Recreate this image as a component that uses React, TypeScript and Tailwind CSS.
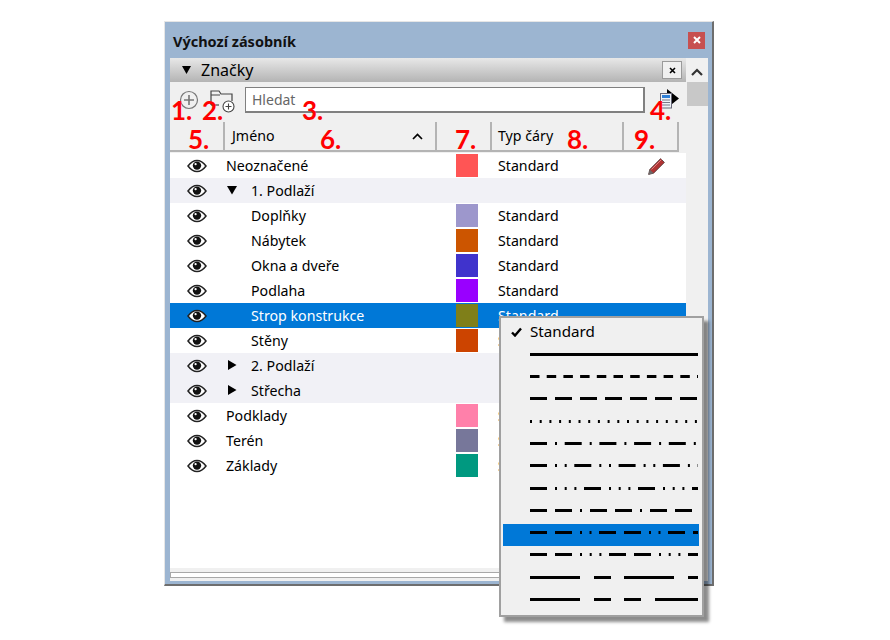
const font = "font-['Noto_Sans',sans-serif]";

type Row = {
  name: string;
  color?: string;
  kind?: "group" | "open" | "closed" | "child";
  selected?: boolean;
  pencil?: boolean;
};

const rows: Row[] = [
  { name: "Neoznačené", color: "#ff5555", pencil: true },
  { name: "1. Podlaží", kind: "open" },
  { name: "Doplňky", color: "#9d97cc", kind: "child" },
  { name: "Nábytek", color: "#cc5500", kind: "child" },
  { name: "Okna a dveře", color: "#4033cc", kind: "child" },
  { name: "Podlaha", color: "#9900ff", kind: "child" },
  { name: "Strop konstrukce", color: "#7f7f19", kind: "child", selected: true },
  { name: "Stěny", color: "#cc4400", kind: "child" },
  { name: "2. Podlaží", kind: "closed" },
  { name: "Střecha", kind: "closed" },
  { name: "Podklady", color: "#ff80aa" },
  { name: "Terén", color: "#77779a" },
  { name: "Základy", color: "#009980" },
];

const dashes: string[] = [
  "",
  "9.5 7.2",
  "17 8",
  "2 7.7",
  "17 8 2 7.7",
  "17 8 2 7.7 2 7.6",
  "17 8 2 7.7 2 7.7 2 7.6",
  "17 8 17 8 2 8",
  "17 8 17 8 2 7.5 2 7.5",
  "17 8 17 8 2 7.7 2 7.7 2 7.6",
  "50 14 17 13",
  "50 14 17 13 17 14",
];

function Eye() {
  return (
    <svg width="20" height="14" viewBox="0 0 20 14">
      <path d="M1 7C4 3 7 1.5 10 1.5S16 3 19 7C16 11 13 12.5 10 12.5S4 11 1 7Z" fill="white" stroke="#222" strokeWidth="1.5" />
      <circle cx="10" cy="6.6" r="4.2" fill="#111" />
      <circle cx="8.6" cy="5.2" r="1.1" fill="white" />
    </svg>
  );
}

function Pencil() {
  return (
    <svg width="18" height="18" viewBox="0 0 18 18">
      <path d="M0.6 17.4L1.8 12.4L12.6 1.6L16.4 5.4L5.6 16.2Z" fill="#b03434" stroke="#4a3a3a" strokeWidth="0.8" />
      <path d="M3.5 12.5L13.5 2.5" stroke="#e08080" strokeWidth="1" />
      <path d="M0.6 17.4L1.8 12.4L5.6 16.2Z" fill="#6a6a6a" />
    </svg>
  );
}

function ListRow({ row }: { row: Row }) {
  const isGroup = row.kind === "open" || row.kind === "closed";
  return (
    <div
      className={`flex h-[25px] items-center text-[14.2px] ${
        row.selected ? "bg-[#0078d7] text-white" : isGroup ? "bg-[#f1f1f6] text-black" : "bg-white text-black"
      }`}
    >
      <div className="flex w-[56px] shrink-0 justify-center pr-[2px]">
        <Eye />
      </div>
      <div className="flex w-[230px] min-w-0 shrink-0 items-center">
        {row.kind === "open" && (
          <svg className="mr-[14px] ml-[1px]" width="10" height="10" viewBox="0 0 10 10">
            <path d="M0 1H10L5 9.5Z" fill="black" />
          </svg>
        )}
        {row.kind === "closed" && (
          <svg className="mr-[14px] ml-[1px]" width="10" height="10" viewBox="0 0 10 10">
            <path d="M1 0V10L9.5 5Z" fill="black" />
          </svg>
        )}
        {row.kind === "child" && <div className="w-[25px]" />}
        <span className="whitespace-nowrap">{row.name}</span>
      </div>
      <div className="flex w-[42px] shrink-0 justify-start">
        {row.color && <div className="h-[23px] w-[22px]" style={{ backgroundColor: row.color }} />}
      </div>
      <div className="w-[150px] shrink-0 whitespace-nowrap">{row.color ? "Standard" : ""}</div>
      {row.pencil && <Pencil />}
    </div>
  );
}

function HeaderCell({ className, children }: { className: string; children?: React.ReactNode }) {
  return (
    <div className={`flex h-[28px] shrink-0 items-center border-r-2 border-[#b4b4b4] text-[14.2px] ${className}`}>
      {children}
    </div>
  );
}

function LineMenu() {
  return (
    <div className="absolute top-[316px] left-[499px] h-[301px] w-[205px] border-2 border-[#a0a0a0] bg-[#f0f0f0] shadow-[5px_5px_3px_rgba(0,0,0,0.45)]">
      <div className="flex h-[27.6px] items-center text-[15.2px] text-black">
        <svg className="mr-[8px] ml-[10px]" width="11" height="10" viewBox="0 0 11 10">
          <path d="M1 5.5L4 8.5L10 1.5" fill="none" stroke="black" strokeWidth="2.4" />
        </svg>
        Standard
      </div>
      {dashes.map((d, i) => (
        <div
          key={i}
          className={`h-[22.3px] pt-[7.2px] ${i === 8 ? "ml-[2px] w-[196px] bg-[#0078d7] pl-[27px]" : "pl-[29px]"}`}
        >
          <svg className="block" width="168" height="3" viewBox="0 0 168 3">
            <line x1="0" y1="1.5" x2="168" y2="1.5" stroke="black" strokeWidth="3" strokeDasharray={d || undefined} />
          </svg>
        </div>
      ))}
    </div>
  );
}

export default function App() {
  return (
    <div className={`relative h-[640px] w-[890px] overflow-hidden bg-white pt-[21px] pl-[164px] ${font}`}>
      <div className="h-[565px] w-[550px] border-t border-l border-[#e6e6e6] border-r-2 border-b-2 border-r-[#6e6e6e] border-b-[#6e6e6e] bg-[#9cb5d1] pr-[4px] pb-[3px] pl-[5px]">
        {/* title bar */}
        <div className="flex h-[36px] items-center justify-between pr-[3px] pl-[3px]">
          <span className="mt-[4px] text-[14.5px] font-bold text-[#111]">Výchozí zásobník</span>
          <div className="flex h-[17px] w-[17px] items-center justify-center bg-[#c75050]">
            <svg width="8" height="8" viewBox="0 0 8 8">
              <path d="M1 1L7 7M7 1L1 7" stroke="white" strokeWidth="2" />
            </svg>
          </div>
        </div>

        <div className="flex h-[523px]">
          <div className="flex w-[516px] flex-col bg-white">
            {/* section header */}
            <div className="flex h-[24px] shrink-0 items-center justify-between bg-gradient-to-b from-[#e8e8e8] to-[#b4b4b4] pr-[4px] pl-[12px]">
              <div className="flex items-center">
                <svg className="mr-[10px]" width="9" height="8" viewBox="0 0 9 8">
                  <path d="M0 0H9L4.5 8Z" fill="black" />
                </svg>
                <span className="text-[16px] text-black">Značky</span>
              </div>
              <div className="flex h-[18px] w-[20px] items-center justify-center border border-[#9a9a9a] bg-[#f0f0f0]">
                <svg width="7" height="7" viewBox="0 0 7 7">
                  <path d="M1 1L6 6M6 1L1 6" stroke="black" strokeWidth="1.6" />
                </svg>
              </div>
            </div>

            {/* toolbar */}
            <div className="flex h-[40px] shrink-0 items-start bg-[#f0f0f0] pt-[5px]">
              <svg className="mt-[3px] ml-[9px]" width="20" height="20" viewBox="0 0 20 20">
                <circle cx="10" cy="10" r="8.5" fill="none" stroke="#777" strokeWidth="1.2" />
                <path d="M10 5V15M5 10H15" stroke="#777" strokeWidth="1.6" />
              </svg>
              <svg className="mt-[2px] ml-[11px]" width="26" height="26" viewBox="0 0 26 26">
                <path d="M1 16V2H9L11 5H22V12" fill="none" stroke="#444" strokeWidth="1.2" />
                <path d="M1 6H10" stroke="#444" strokeWidth="1" />
                <path d="M1 16H9" stroke="#444" strokeWidth="1.2" />
                <circle cx="18.5" cy="17.5" r="5.5" fill="white" stroke="#444" strokeWidth="1.1" />
                <path d="M18.5 14.5V20.5M15.5 17.5H21.5" stroke="#444" strokeWidth="1.1" />
              </svg>
              <div className="ml-[9px] flex h-[26px] w-[400px] items-center border-2 border-t border-l border-[#808080] bg-white pl-[6px] text-[14px] text-[#666]">
                Hledat
              </div>
              <svg className="mt-[2px] ml-[15px]" width="20" height="20" viewBox="0 0 20 20">
                <path d="M0 5H7V0L19 9.5L7 19V14H0Z" fill="black" />
                <rect x="0.5" y="4.5" width="11" height="14.5" fill="#eef2f7" stroke="#667" strokeWidth="1" />
                <rect x="2" y="6" width="8" height="3" fill="#2f7fd6" />
                <path d="M2 11H10M2 13.5H10M2 16H10" stroke="#778" strokeWidth="1" />
              </svg>
            </div>

            {/* column header */}
            <div className="flex h-[31px] shrink-0 items-start bg-[#f0f0f0] pr-[7px]">
              <div className="flex h-[30px] w-[509px] border-b-2 border-[#b4b4b4]">
                <HeaderCell className="w-[55px]" />
                <HeaderCell className="w-[212px] justify-between pr-[12px] pl-[7px]">
                  <span>Jméno</span>
                  <svg width="11" height="7" viewBox="0 0 11 7">
                    <path d="M1 6L5.5 1.5L10 6" fill="none" stroke="black" strokeWidth="1.7" />
                  </svg>
                </HeaderCell>
                <HeaderCell className="w-[55px]" />
                <HeaderCell className="w-[132px] pl-[6px]">Typ čáry</HeaderCell>
                <HeaderCell className="w-[55px]" />
              </div>
            </div>

            {/* layer rows */}
            <div className="flex-1">
              {rows.map((r) => (
                <ListRow key={r.name} row={r} />
              ))}
            </div>

            {/* horizontal scrollbar */}
            <div className="flex h-[13px] shrink-0 items-start bg-[#f0f0f0] pt-[4px]">
              <div className="h-[6px] w-full border border-[#a8a8a8] bg-white" />
            </div>
          </div>

          {/* vertical scrollbar */}
          <div className="w-[22px] bg-[#f0f0f0]">
            <div className="flex h-[24px] items-center justify-center">
              <svg className="mt-[3px]" width="12" height="8" viewBox="0 0 12 8">
                <path d="M1 7L6 2L11 7" fill="none" stroke="#333" strokeWidth="2.2" />
              </svg>
            </div>
            <div className="ml-[1px] h-[24px] w-[21px] bg-[#c8c8c8]" />
          </div>
        </div>
      </div>

      <LineMenu />

      {/* callout numbers */}
      <span className="absolute top-[94px] left-[171px] font-['Lato',sans-serif] text-[26px] leading-[32px] font-bold text-[#ff0000]">1.</span>
      <span className="absolute top-[94px] left-[202px] font-['Lato',sans-serif] text-[26px] leading-[32px] font-bold text-[#ff0000]">2.</span>
      <span className="absolute top-[94px] left-[302px] font-['Lato',sans-serif] text-[26px] leading-[32px] font-bold text-[#ff0000]">3.</span>
      <span className="absolute top-[94px] left-[650px] font-['Lato',sans-serif] text-[26px] leading-[32px] font-bold text-[#ff0000]">4.</span>
      <span className="absolute top-[123px] left-[188px] font-['Lato',sans-serif] text-[26px] leading-[32px] font-bold text-[#ff0000]">5.</span>
      <span className="absolute top-[123px] left-[320px] font-['Lato',sans-serif] text-[26px] leading-[32px] font-bold text-[#ff0000]">6.</span>
      <span className="absolute top-[123px] left-[455px] font-['Lato',sans-serif] text-[26px] leading-[32px] font-bold text-[#ff0000]">7.</span>
      <span className="absolute top-[123px] left-[567px] font-['Lato',sans-serif] text-[26px] leading-[32px] font-bold text-[#ff0000]">8.</span>
      <span className="absolute top-[123px] left-[634px] font-['Lato',sans-serif] text-[26px] leading-[32px] font-bold text-[#ff0000]">9.</span>
    </div>
  );
}
